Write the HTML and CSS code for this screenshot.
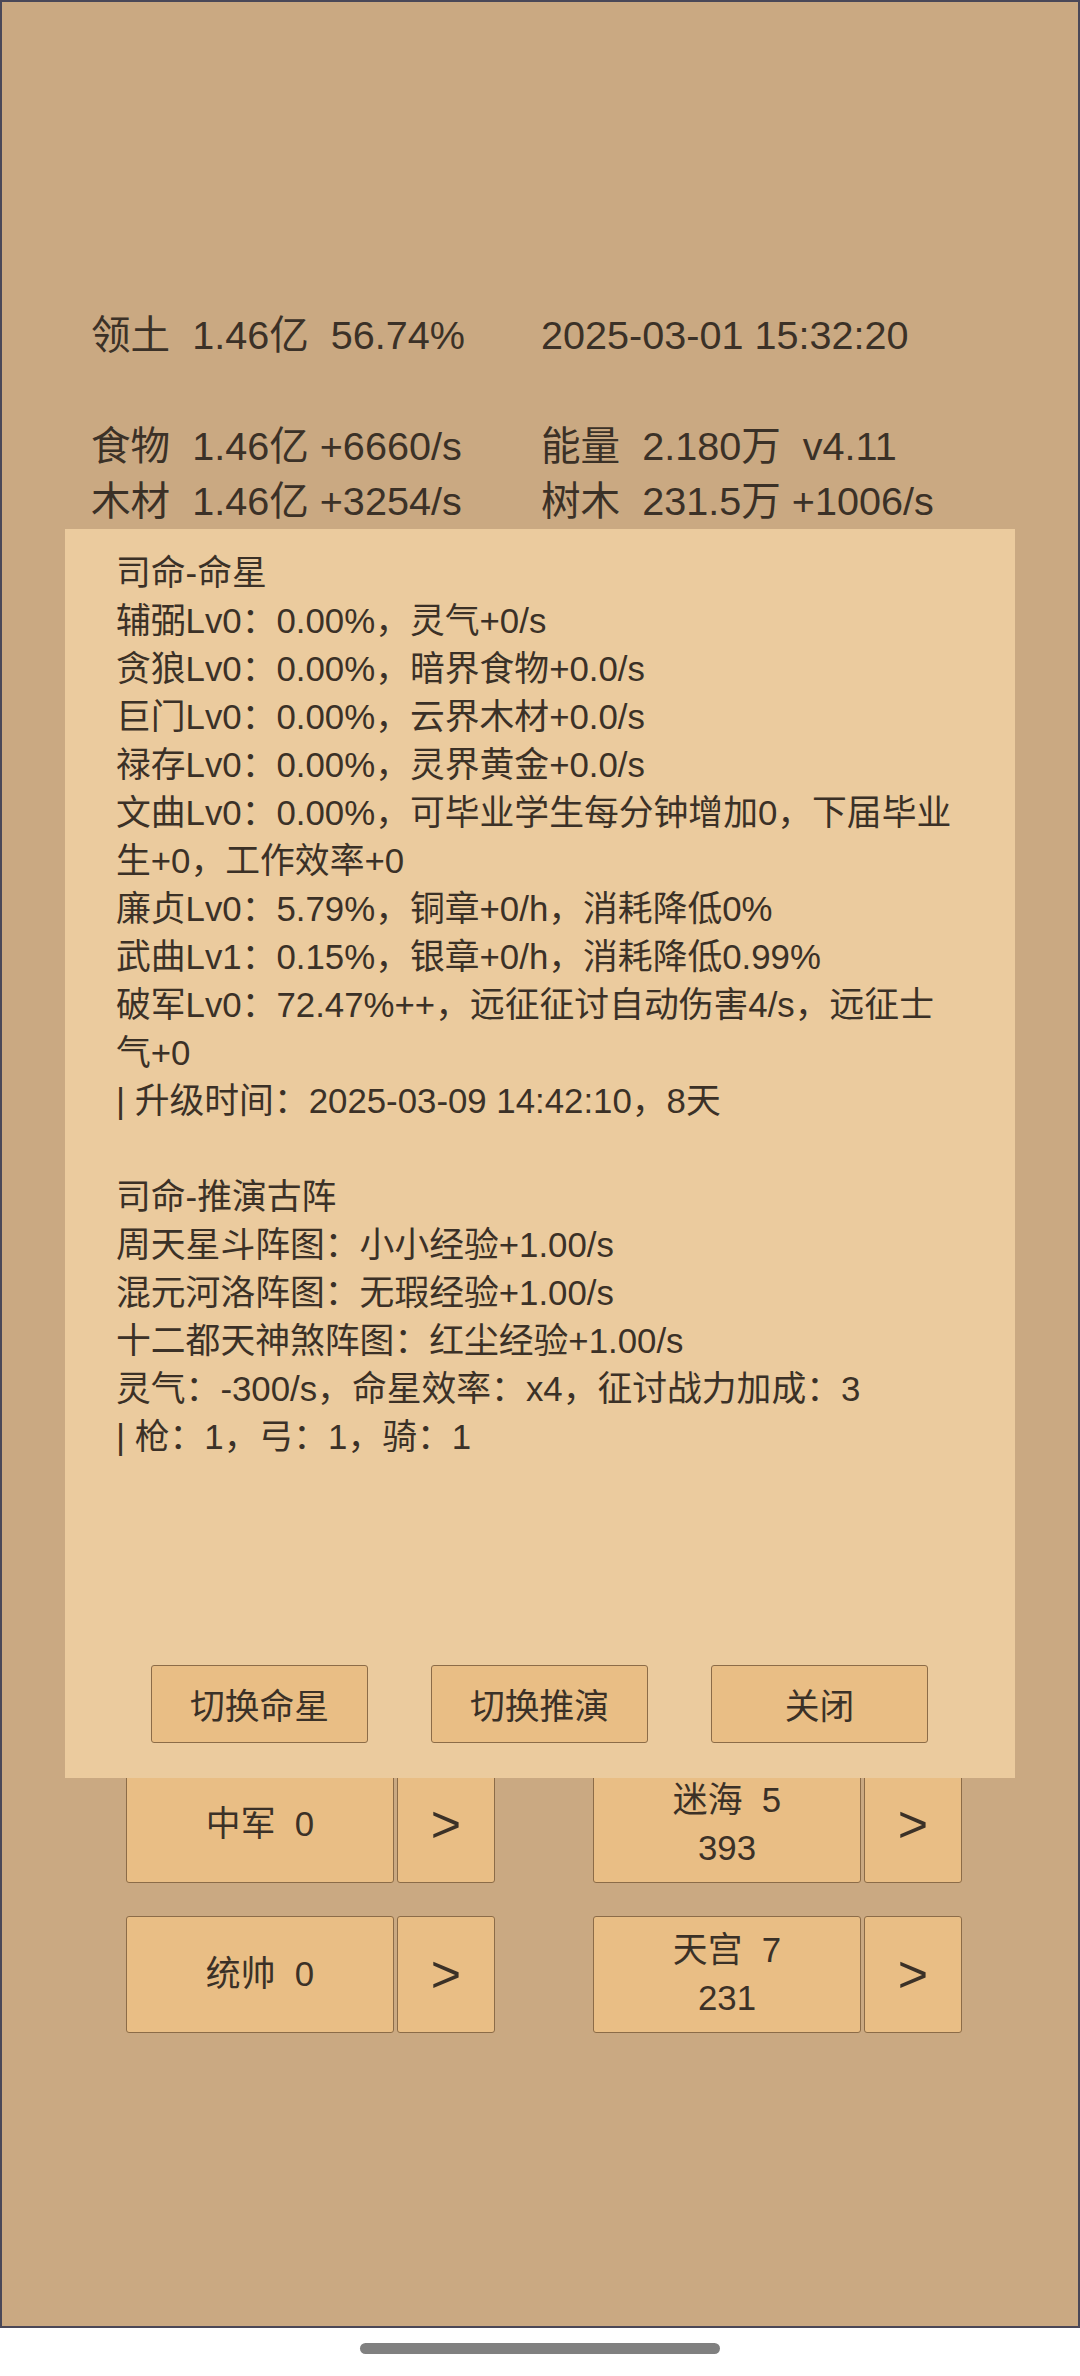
FILE: index.html
```html
<!DOCTYPE html>
<html lang="zh-CN">
<head>
<meta charset="utf-8">
<title>司命</title>
<link rel="stylesheet" href="styles.css">
</head>
<body>
<div class="screen">
  <div class="stats">
    <div class="cell">领土  1.46亿  56.74%</div>
    <div class="cell">2025-03-01 15:32:20</div>
    <div class="blank"></div>
    <div class="cell">食物  1.46亿 +6660/s</div>
    <div class="cell">能量  2.180万  v4.11</div>
    <div class="cell">木材  1.46亿 +3254/s</div>
    <div class="cell">树木  231.5万 +1006/s</div>
  </div>

  <div class="btn-rows">
    <div class="btn-row">
      <div class="group">
        <div class="main-btn"><span class="line">中军  0</span></div>
        <div class="arrow-btn">&gt;</div>
      </div>
      <div class="group">
        <div class="main-btn"><span class="line">迷海  5</span><span class="line">393</span></div>
        <div class="arrow-btn">&gt;</div>
      </div>
    </div>
    <div class="btn-row">
      <div class="group">
        <div class="main-btn"><span class="line">统帅  0</span></div>
        <div class="arrow-btn">&gt;</div>
      </div>
      <div class="group">
        <div class="main-btn"><span class="line">天宫  7</span><span class="line">231</span></div>
        <div class="arrow-btn">&gt;</div>
      </div>
    </div>
  </div>

  <div class="modal">
    <div class="modal-text">
      <p>司命-命星</p>
      <p>辅弼Lv0：0.00%，灵气+0/s</p>
      <p>贪狼Lv0：0.00%，暗界食物+0.0/s</p>
      <p>巨门Lv0：0.00%，云界木材+0.0/s</p>
      <p>禄存Lv0：0.00%，灵界黄金+0.0/s</p>
      <p>文曲Lv0：0.00%，可毕业学生每分钟增加0，下届毕业生+0，工作效率+0</p>
      <p>廉贞Lv0：5.79%，铜章+0/h，消耗降低0%</p>
      <p>武曲Lv1：0.15%，银章+0/h，消耗降低0.99%</p>
      <p>破军Lv0：72.47%++，远征征讨自动伤害4/s，远征士气+0</p>
      <p>| 升级时间：2025-03-09 14:42:10，8天</p>
      <p class="empty"></p>
      <p>司命-推演古阵</p>
      <p>周天星斗阵图：小小经验+1.00/s</p>
      <p>混元河洛阵图：无瑕经验+1.00/s</p>
      <p>十二都天神煞阵图：红尘经验+1.00/s</p>
      <p>灵气：-300/s，命星效率：x4，征讨战力加成：3</p>
      <p>| 枪：1，弓：1，骑：1</p>
    </div>
    <div class="modal-actions">
      <div class="modal-btn">切换命星</div>
      <div class="modal-btn">切换推演</div>
      <div class="modal-btn">关闭</div>
    </div>
  </div>
</div>
<div class="home-bar"></div>
</body>
</html>
```

FILE: styles.css
```css
html, body {
  margin: 0;
  padding: 0;
  background: #ffffff;
}

body {
  font-family: "Liberation Sans", "Noto Sans CJK SC", sans-serif;
  color: #3b3127;
}

.screen {
  position: relative;
  box-sizing: border-box;
  width: 1080px;
  height: 2328px;
  border: 2px solid #4a4858;
  background: #caa982;
  overflow: hidden;
}

.stats {
  display: grid;
  grid-template-columns: 450px 450px;
  padding: 305.5px 0 0 89px;
  font-size: 39.6px;
  line-height: 55.5px;
}

.cell {
  white-space: pre;
}

.blank {
  grid-column: span 2;
  height: 55.5px;
}

.btn-rows {
  display: flex;
  flex-direction: column;
  gap: 33px;
  margin-top: 1236px;
  padding-left: 124px;
}

.btn-row {
  display: flex;
  gap: 98px;
}

.group {
  display: flex;
  gap: 3px;
}

.main-btn,
.arrow-btn {
  box-sizing: border-box;
  height: 117px;
  background: #e9be85;
  border: 1px solid #8c6c48;
  border-radius: 3px;
  display: flex;
  flex-direction: column;
  align-items: center;
  justify-content: center;
}

.main-btn {
  width: 268px;
  font-size: 34.8px;
  line-height: 48px;
}

.main-btn .line {
  white-space: pre;
}

.arrow-btn {
  width: 98px;
  font-size: 52px;
  line-height: 1;
}

.modal {
  position: absolute;
  top: 527px;
  left: 63px;
  box-sizing: border-box;
  width: 950px;
  height: 1249px;
  padding: 20px 52px 35px 51px;
  background: #ebcb9e;
  display: flex;
  flex-direction: column;
}

.modal-text {
  flex: 1;
  font-size: 34.8px;
  line-height: 48px;
}

.modal-text p {
  margin: 0;
}

.modal-text .empty {
  height: 48px;
}

.modal-actions {
  display: flex;
  justify-content: center;
  gap: 63px;
}

.modal-btn {
  box-sizing: border-box;
  width: 217px;
  height: 78px;
  background: #e9be85;
  border: 1px solid #8c6c48;
  border-radius: 3px;
  display: flex;
  align-items: center;
  justify-content: center;
  font-size: 34.8px;
}

.home-bar {
  width: 360px;
  height: 11px;
  margin: 15px auto 0;
  border-radius: 6px;
  background: #808080;
}
```
